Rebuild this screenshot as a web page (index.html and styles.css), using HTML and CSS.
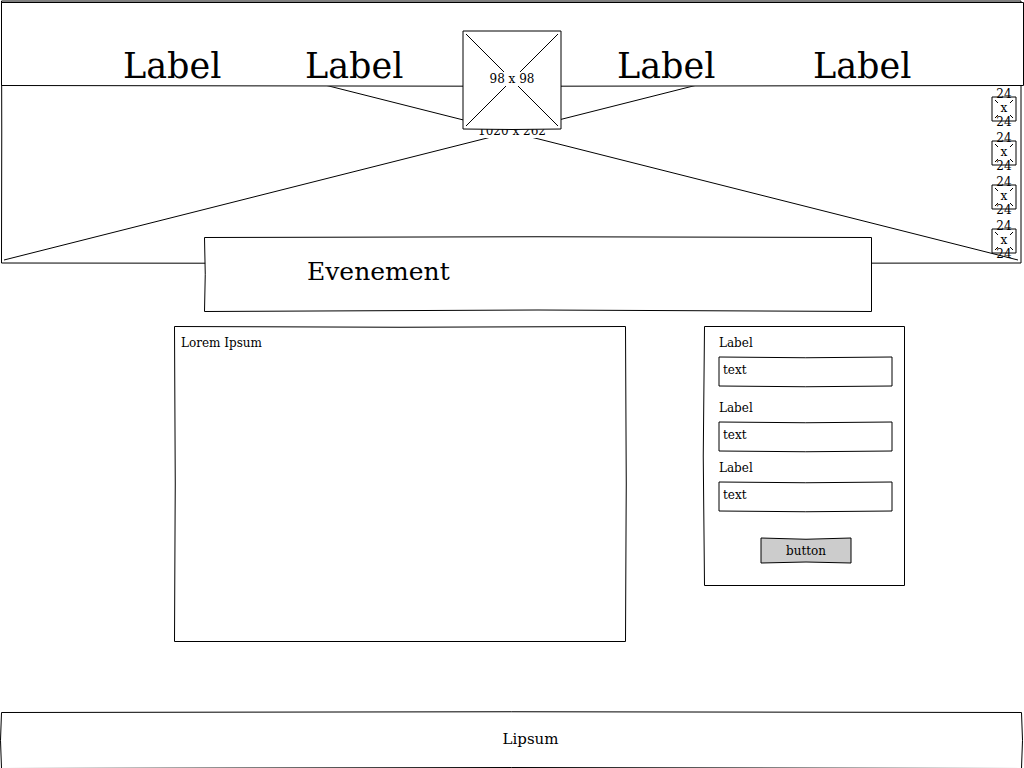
FILE: index.html
```html
<!DOCTYPE html>
<html lang="fr">
<head>
<meta charset="utf-8">
<meta name="viewport" content="width=device-width, initial-scale=1">
<title>Evenement</title>
<link rel="stylesheet" href="styles.css">
</head>
<body>
<div class="page">
  <section class="hero">
    <svg class="outline" viewBox="0 0 1024 264" preserveAspectRatio="none" aria-hidden="true">
      <path d="M1.5 1H1021V263Q511 264 1.5 263Q2 132 1.5 1Z"/>
      <path d="M4 4L1018 260M4 260L1018 4"/>
    </svg>
    <header class="topbar">
      <svg class="outline" viewBox="0 0 1024 86" preserveAspectRatio="none" aria-hidden="true">
        <path class="paper" d="M1.5 2.5H1023.5V85.5Q512 87 1.5 85.5Z"/>
      </svg>
      <nav class="nav">
        <a class="nav-link nav-first" href="#">Label</a>
        <a class="nav-link" href="#">Label</a>
        <a class="logo" href="#">
          <svg class="outline" viewBox="0 0 100 100" preserveAspectRatio="none" aria-hidden="true">
            <path class="paper" d="M1 1H99V99Q50 100 1 99Z"/>
            <path d="M4 4L96 96M4 96L96 4"/>
          </svg>
          <span class="size">98 x 98</span>
        </a>
        <a class="nav-link" href="#">Label</a>
        <a class="nav-link" href="#">Label</a>
      </nav>
    </header>
    <div class="stage">
      <span class="size stage-size">1020 x 262</span>
      <ul class="social">
        <li><a class="social-link" href="#"><svg class="outline" viewBox="0 0 26 26" aria-hidden="true"><path class="paper" d="M1 1H25V25H1Z"/><path d="M4 4L7 7M22 4L19 7M4 22L7 19M22 22L19 19"/></svg><span class="social-size">24 x 24</span></a></li>
        <li><a class="social-link" href="#"><svg class="outline" viewBox="0 0 26 26" aria-hidden="true"><path class="paper" d="M1 1H25V25H1Z"/><path d="M4 4L7 7M22 4L19 7M4 22L7 19M22 22L19 19"/></svg><span class="social-size">24 x 24</span></a></li>
        <li><a class="social-link" href="#"><svg class="outline" viewBox="0 0 26 26" aria-hidden="true"><path class="paper" d="M1 1H25V25H1Z"/><path d="M4 4L7 7M22 4L19 7M4 22L7 19M22 22L19 19"/></svg><span class="social-size">24 x 24</span></a></li>
        <li><a class="social-link" href="#"><svg class="outline" viewBox="0 0 26 26" aria-hidden="true"><path class="paper" d="M1 1H25V25H1Z"/><path d="M4 4L7 7M22 4L19 7M4 22L7 19M22 22L19 19"/></svg><span class="social-size">24 x 24</span></a></li>
      </ul>
    </div>
  </section>

  <div class="banner-row">
    <div class="banner">
      <svg class="outline" viewBox="0 0 668 75" preserveAspectRatio="none" aria-hidden="true">
        <path class="paper" d="M.5 .5Q334 -1 667.5 .5V74.5Q334 71.5 .5 74.5Q2 37 .5 .5Z"/>
      </svg>
      <h1 class="banner-title">Evenement</h1>
    </div>
  </div>

  <main class="content">
    <article class="article">
      <svg class="outline" viewBox="0 0 452 316" preserveAspectRatio="none" aria-hidden="true">
        <path class="paper" d="M.5 .5Q226 2 451.5 .5Q453 158 451.5 315.5H.5Q2 158 .5 .5Z"/>
      </svg>
      <p class="article-text">Lorem Ipsum</p>
    </article>
    <form class="panel">
      <svg class="outline" viewBox="0 0 201 260" preserveAspectRatio="none" aria-hidden="true">
        <path class="paper" d="M.5 .5H200.5V259.5H.5Q-2 130 .5 .5Z"/>
      </svg>
      <div class="field field-lead">
        <label for="field-1">Label</label>
        <div class="control">
          <svg class="outline" viewBox="0 0 174 30" preserveAspectRatio="none" aria-hidden="true"><path class="paper" d="M0 1Q87 2.5 173 1V30Q87 31.5 0 30Z"/></svg>
          <input class="input" id="field-1" type="text" value="text">
        </div>
      </div>
      <div class="field">
        <label for="field-2">Label</label>
        <div class="control">
          <svg class="outline" viewBox="0 0 174 30" preserveAspectRatio="none" aria-hidden="true"><path class="paper" d="M0 1Q87 2.5 173 1V30Q87 31.5 0 30Z"/></svg>
          <input class="input" id="field-2" type="text" value="text">
        </div>
      </div>
      <div class="field">
        <label for="field-3">Label</label>
        <div class="control">
          <svg class="outline" viewBox="0 0 174 30" preserveAspectRatio="none" aria-hidden="true"><path class="paper" d="M0 1Q87 2.5 173 1V30Q87 31.5 0 30Z"/></svg>
          <input class="input" id="field-3" type="text" value="text">
        </div>
      </div>
      <button class="button" type="button">
        <svg class="outline" viewBox="0 0 92 26" preserveAspectRatio="none" aria-hidden="true"><path class="shade" d="M1 0Q46 2.5 91 0V25Q46 23 1 25Z"/></svg>
        <span class="button-text">button</span>
      </button>
    </form>
  </main>

  <footer class="footer">
    <svg class="outline" viewBox="0 0 1024 56" preserveAspectRatio="none" aria-hidden="true">
      <path class="paper" d="M1.5 .5Q512 -1 1021.5 .5Q1023.5 28 1021.5 56.5Q512 54.5 1.5 56.5Q-.5 28 1.5 .5Z"/>
    </svg>
    <p class="footer-text">Lipsum</p>
  </footer>
</div>
</body>
</html>
```
FILE: styles.css
```css
* {
  box-sizing: border-box;
}

body {
  margin: 0;
  background: #fff;
  color: #000;
  font: 12px/14px "DejaVu Serif", serif;
}

a {
  color: inherit;
  text-decoration: none;
}

p,
h1,
ul {
  margin: 0;
  padding: 0;
  font-weight: 400;
}

.page {
  display: flex;
  flex-direction: column;
  min-height: 100vh;
  overflow: hidden;
}

/* Hand-drawn frame stretched behind the content of its box */
.outline {
  position: absolute;
  inset: 0;
  width: 100%;
  height: 100%;
  overflow: visible;
  fill: none;
  stroke: #000;
  stroke-width: 1;
  pointer-events: none;
}

.outline path {
  vector-effect: non-scaling-stroke;
}

.paper {
  fill: #fff;
}

.shade {
  fill: #ccc;
}

.size {
  background: #fff;
}

/* Hero */
.hero {
  position: relative;
}

.topbar {
  position: relative;
  z-index: 1;
}

.nav {
  position: relative;
  display: grid;
  grid-template-columns: 122fr 182fr 158fr 154fr 196fr 212fr;
  align-items: end;
  height: 86px;
}

.nav-link {
  padding-left: 1px;
  font-size: 35px;
  line-height: 40px;
}

.nav-first {
  grid-column: 2;
}

.logo {
  position: relative;
  display: grid;
  place-items: center;
  width: 100px;
  height: 100px;
  margin-bottom: -44px;
  padding-bottom: 2px;
}

.logo .size {
  position: relative;
}

.stage {
  position: relative;
  display: grid;
  grid-template-columns: 1fr auto 1fr;
  align-items: start;
  height: 178px;
  padding: 10px 7px 0;
}

.stage-size {
  grid-column: 2;
  margin-top: 28px;
}

.social {
  display: flex;
  flex-direction: column;
  justify-self: end;
  gap: 18px;
  list-style: none;
}

.social-link {
  position: relative;
  display: grid;
  grid-template-rows: 24px;
  place-items: center;
  width: 26px;
  height: 26px;
}

.social-size {
  position: relative;
  width: 16px;
  text-align: center;
}

/* Banner */
.banner-row {
  display: grid;
  grid-template-columns: 204fr 668fr 152fr;
  margin-top: -27px;
}

.banner {
  position: relative;
  grid-column: 2;
  padding: 20px 103px 25px;
}

.banner-title {
  position: relative;
  font-size: 25px;
  line-height: 30px;
}

/* Content */
.content {
  display: grid;
  grid-template-columns: 174fr 452fr 78fr 201fr 119fr;
  align-items: start;
  flex: 1;
  padding: 14px 0 70px;
}

.article {
  position: relative;
  grid-column: 2;
  min-height: 316px;
  padding: 10px 7px;
}

.article-text {
  position: relative;
}

.panel {
  position: relative;
  grid-column: 4;
  display: flex;
  flex-direction: column;
  gap: 10px;
  padding: 10px 12px 22px 15px;
}

.field {
  position: relative;
  display: flex;
  flex-direction: column;
  gap: 6px;
}

.field-lead {
  padding-bottom: 5px;
}

.control {
  position: relative;
  display: flex;
}

.input {
  position: relative;
  width: 100%;
  height: 30px;
  padding: 0 4px 2px;
  border: 0;
  background: transparent;
  color: inherit;
  font: inherit;
}

.button {
  position: relative;
  align-self: center;
  width: 92px;
  height: 26px;
  margin-top: 17px;
  padding: 0;
  border: 0;
  background: transparent;
  color: inherit;
  font: inherit;
}

.button-text {
  position: relative;
}

/* Footer */
.footer {
  position: relative;
  padding: 17px 0 19px 37px;
  text-align: center;
}

.footer-text {
  position: relative;
  font-size: 15px;
  line-height: 20px;
}
```
